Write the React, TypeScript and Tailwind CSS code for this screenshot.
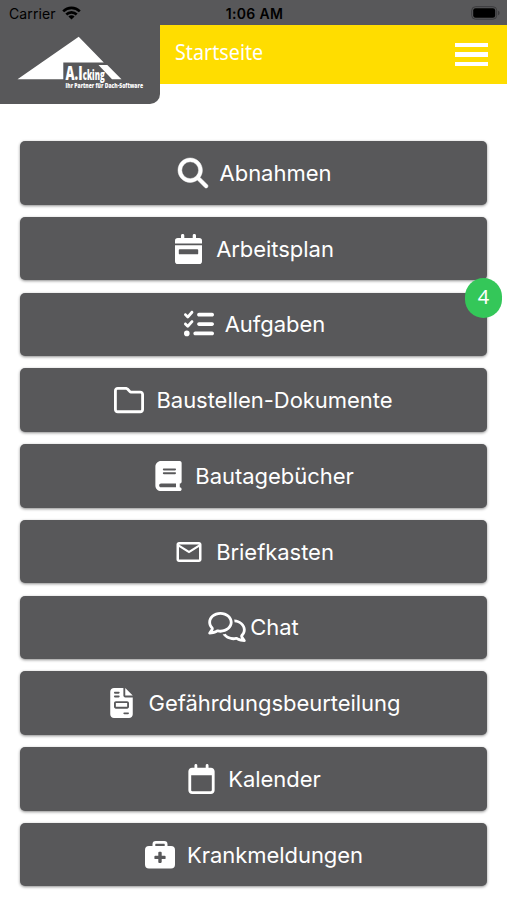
import type { ReactNode } from 'react';
import {
  FaBook,
  FaListCheck,
  FaMagnifyingGlass,
  FaRegCalendar,
  FaRegComments,
  FaRegFolder,
} from 'react-icons/fa6';
import { MdMailOutline } from 'react-icons/md';

type MenuItem = {
  label: string;
  icon: ReactNode;
  spacing: string;
  badge?: number;
};

function PlanIcon() {
  return (
    <svg className="h-[30px] w-[27px]" fill="currentColor" viewBox="0 0 27 30">
      <path d="M6 1.6a1.6 1.6 0 0 1 3.3 0V4h8.4V1.6a1.6 1.6 0 0 1 3.3 0V4h3.2A2.8 2.8 0 0 1 27 6.8v2.7H0V6.8A2.8 2.8 0 0 1 2.8 4H6z" />
      <path
        d="M0 11.3h27v15.9a2.8 2.8 0 0 1-2.8 2.8H2.8A2.8 2.8 0 0 1 0 27.2zM4.7 15.2a.9.9 0 0 0-.9.9v3.3c0 .5.4.9.9.9h17.6c.5 0 .9-.4.9-.9v-3.3a.9.9 0 0 0-.9-.9z"
        fillRule="evenodd"
      />
    </svg>
  );
}

function ReportIcon() {
  return (
    <svg className="h-[30px] w-[23px]" fill="currentColor" viewBox="0 0 384 512">
      <path
        d="M64 0C28.7 0 0 28.7 0 64v384c0 35.3 28.7 64 64 64h256c35.3 0 64-28.7 64-64V160H256c-17.7 0-32-14.3-32-32V0zM256 0v128h128zM80 64h64c8.8 0 16 7.2 16 16s-7.2 16-16 16H80c-8.8 0-16-7.2-16-16s7.2-16 16-16zm0 64h64c8.8 0 16 7.2 16 16s-7.2 16-16 16H80c-8.8 0-16-7.2-16-16s7.2-16 16-16zm16 96h192c17.7 0 32 14.3 32 32v64c0 17.7-14.3 32-32 32H96c-17.7 0-32-14.3-32-32v-64c0-17.7 14.3-32 32-32zm0 32v64h192v-64zm144 160h64c8.8 0 16 7.2 16 16s-7.2 16-16 16h-64c-8.8 0-16-7.2-16-16s7.2-16 16-16z"
        fillRule="evenodd"
      />
    </svg>
  );
}

function MedicalIcon() {
  return (
    <svg className="size-[30px]" fill="currentColor" viewBox="0 0 30 30">
      <path
        d="M7.5 6V4.3A3.3 3.3 0 0 1 10.8 1h8.4a3.3 3.3 0 0 1 3.3 3.3V6H26a4 4 0 0 1 4 4v14.5a4 4 0 0 1-4 4H4a4 4 0 0 1-4-4V10a4 4 0 0 1 4-4zM10.3 6h9.4V4.3a.5.5 0 0 0-.5-.5h-8.4a.5.5 0 0 0-.5.5zM13.3 12.7v3H10.3c-.5 0-.9.4-.9.9v1.6c0 .5.4.9.9.9h3v3c0 .5.4.9.9.9h1.6c.5 0 .9-.4.9-.9v-3h3c.5 0 .9-.4.9-.9v-1.6c0-.5-.4-.9-.9-.9h-3v-3c0-.5-.4-.9-.9-.9h-1.6c-.5 0-.9.4-.9.9z"
        fillRule="evenodd"
      />
    </svg>
  );
}

const items: MenuItem[] = [
  {
    label: 'Abnahmen',
    icon: (
      <FaMagnifyingGlass
        className="size-[30px] overflow-visible"
        stroke="currentColor"
        strokeWidth={8}
      />
    ),
    spacing: 'gap-[12px] pl-[2px]',
  },
  {
    label: 'Arbeitsplan',
    icon: <PlanIcon />,
    spacing: 'gap-[14px] pl-[2px]',
  },
  {
    label: 'Aufgaben',
    icon: <FaListCheck className="size-[30px]" />,
    spacing: 'gap-[11px] pl-[2px]',
    badge: 4,
  },
  {
    label: 'Baustellen-Dokumente',
    icon: <FaRegFolder className="size-[30px]" />,
    spacing: 'gap-[12px]',
  },
  {
    label: 'Bautagebücher',
    icon: <FaBook className="h-[30px] w-[27px]" />,
    spacing: 'gap-[13px] pl-[2px]',
  },
  {
    label: 'Briefkasten',
    icon: <MdMailOutline className="size-[30px]" />,
    spacing: 'gap-[12px] pl-px',
  },
  {
    label: 'Chat',
    icon: <FaRegComments className="h-[30px] w-[38px]" />,
    spacing: 'gap-[4px]',
  },
  {
    label: 'Gefährdungsbeurteilung',
    icon: <ReportIcon />,
    spacing: 'gap-[16px] pl-[3px]',
  },
  {
    label: 'Kalender',
    icon: <FaRegCalendar className="h-[30px] w-[27px]" />,
    spacing: 'gap-[13px] pl-[2px]',
  },
  {
    label: 'Krankmeldungen',
    icon: <MedicalIcon />,
    spacing: 'gap-[12px] pl-px',
  },
];

function StatusBar() {
  return (
    <div className="grid h-[25px] grid-cols-3 items-center bg-[#58585a] pt-[2px] pr-[7px] pl-[9px] text-[14px] text-black">
      <div className="flex items-center gap-[6px]">
        <span className="tracking-[0.1px]">Carrier</span>
        <svg className="mb-[2px] h-[14px] w-[19px]" viewBox="0 0 19 14">
          <g fill="none" stroke="currentColor" strokeWidth="2.6">
            <path d="M1.2 5.3a11.8 11.8 0 0 1 16.6 0" />
            <path d="M4.3 8.5a7.4 7.4 0 0 1 10.4 0" />
          </g>
          <path d="M9.5 13.6 6.4 10.5a4.4 4.4 0 0 1 6.2 0z" />
        </svg>
      </div>
      <span className="text-center font-semibold tracking-[0.3px]">
        1:06 AM
      </span>
      <svg
        className="mb-[2px] h-[14px] w-[29px] justify-self-end"
        viewBox="0 0 29 14"
      >
        <rect
          fill="none"
          height="12.5"
          rx="3.8"
          stroke="#3b3b3d"
          width="25"
          x=".7"
          y=".7"
        />
        <rect height="9.5" rx="2.3" width="22" x="2.2" y="2.2" />
        <path d="M27 4.8a2.3 2.3 0 0 1 0 4.4z" fill="#3b3b3d" />
      </svg>
    </div>
  );
}

function Logo() {
  return (
    <svg
      className="h-[60px] w-[132px] overflow-visible"
      fill="#fff"
      viewBox="17 36 132 60"
    >
      <path d="M17.5 79.3 78.7 36.8 103.8 62.5H63.3V79.3z" />
      <path d="M98.5 65h8.8l14.2 14.3H112z" />
      <g fontFamily="'Open Sans', sans-serif" fontWeight="800">
        <text
          fontSize="20"
          lengthAdjust="spacingAndGlyphs"
          textLength="17"
          x="65.5"
          y="79.5"
        >
          A.I
        </text>
        <text
          fontSize="14"
          lengthAdjust="spacingAndGlyphs"
          textLength="22"
          x="82.7"
          y="79.5"
        >
          cking
        </text>
        <text
          fontSize="7"
          lengthAdjust="spacingAndGlyphs"
          textLength="77.5"
          x="65.5"
          y="87.5"
        >
          Ihr Partner für Dach-Software
        </text>
      </g>
    </svg>
  );
}

function Header() {
  return (
    <header className="flex h-[79px] items-start">
      <div className="flex h-[79px] w-[160px] items-start rounded-br-[10px] bg-[#58585a] pt-[11px] pl-[17px]">
        <Logo />
      </div>
      <div className="flex h-[59px] flex-1 items-center justify-between bg-[#fd0] pr-[19px] pl-[15px]">
        <h1 className="mb-[3px] origin-left scale-x-[0.94] font-['Noto_Sans'] text-[21px] text-white">
          Startseite
        </h1>
        <button className="flex w-[33px] flex-col gap-[5px]" type="button">
          <span className="h-[4.5px] bg-white" />
          <span className="h-[4.5px] bg-white" />
          <span className="h-[4.5px] bg-white" />
        </button>
      </div>
    </header>
  );
}

function MenuButton({ item }: { item: MenuItem }) {
  return (
    <button
      className={`relative flex h-[63.5px] w-full items-center justify-center rounded-[5px] bg-[#58585a] text-[22px] tracking-[-0.04px] text-white shadow-[0_1px_3px_rgba(0,0,0,0.45)] ${item.spacing}`}
      type="button"
    >
      {item.icon}
      <span className="pt-px">{item.label}</span>
      {item.badge && (
        <span className="absolute -top-[15px] -right-[15px] flex h-[40px] w-[37px] items-center justify-center rounded-full bg-[#34c759] pb-[2px] font-['Noto_Sans'] text-[20px]">
          {item.badge}
        </span>
      )}
    </button>
  );
}

export default function App() {
  return (
    <div className="h-[900px] w-[507px] overflow-hidden bg-white font-['Inter',sans-serif]">
      <StatusBar />
      <Header />
      <main className="flex flex-col gap-[12.25px] px-[20px] pt-[37px]">
        {items.map((item) => (
          <MenuButton item={item} key={item.label} />
        ))}
      </main>
    </div>
  );
}
